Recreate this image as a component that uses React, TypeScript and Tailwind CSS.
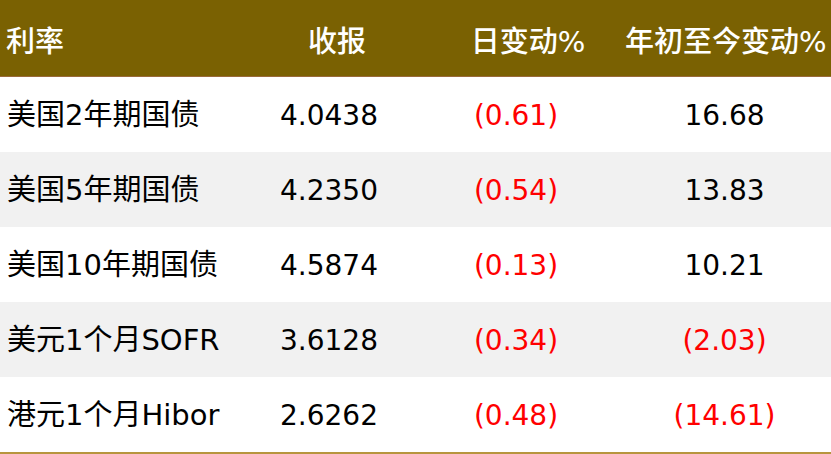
import React from "react";

const rows = [
  { name: "美国2年期国债", close: "4.0438", day: "(0.61)", dayNeg: true, ytd: "16.68", ytdNeg: false, gray: false },
  { name: "美国5年期国债", close: "4.2350", day: "(0.54)", dayNeg: true, ytd: "13.83", ytdNeg: false, gray: true },
  { name: "美国10年期国债", close: "4.5874", day: "(0.13)", dayNeg: true, ytd: "10.21", ytdNeg: false, gray: false },
  { name: "美元1个月SOFR", close: "3.6128", day: "(0.34)", dayNeg: true, ytd: "(2.03)", ytdNeg: true, gray: true },
  { name: "港元1个月Hibor", close: "2.6262", day: "(0.48)", dayNeg: true, ytd: "(14.61)", ytdNeg: true, gray: false },
];

export default function App() {
  return (
    <div
      className="w-[831px] h-[454px] bg-white overflow-hidden"
      style={{ fontFamily: '"DejaVu Sans", "Noto Sans CJK SC", sans-serif' }}
    >
      <div className="h-[77px] bg-[#7a6102] border-b border-[#9a6a3a] grid grid-cols-[240px_178px_196px_217px] items-center pt-[9px] text-white text-[29px] font-medium whitespace-nowrap">
        <div className="pl-[6px]">利率</div>
        <div className="text-center pl-[16px]">收报</div>
        <div className="text-center pl-[24px]">日变动%</div>
        <div className="pl-[11px]">年初至今变动%</div>
      </div>
      {rows.map((r, i) => (
        <div
          key={i}
          className={`h-[75px] grid grid-cols-[240px_178px_196px_217px] items-center pt-[3px] text-[28px] text-black whitespace-nowrap ${r.gray ? "bg-[#f1f1f1]" : "bg-white"}`}
        >
          <div className="pl-[7px] text-[29px]">{r.name}</div>
          <div className="text-center">{r.close}</div>
          <div className={`text-center ${r.dayNeg ? "text-[#ff0000]" : ""}`}>{r.day}</div>
          <div className={`text-center pl-[4px] ${r.ytdNeg ? "text-[#ff0000]" : ""}`}>{r.ytd}</div>
        </div>
      ))}
      <div className="h-[2px] bg-[#b8953e]" />
    </div>
  );
}
